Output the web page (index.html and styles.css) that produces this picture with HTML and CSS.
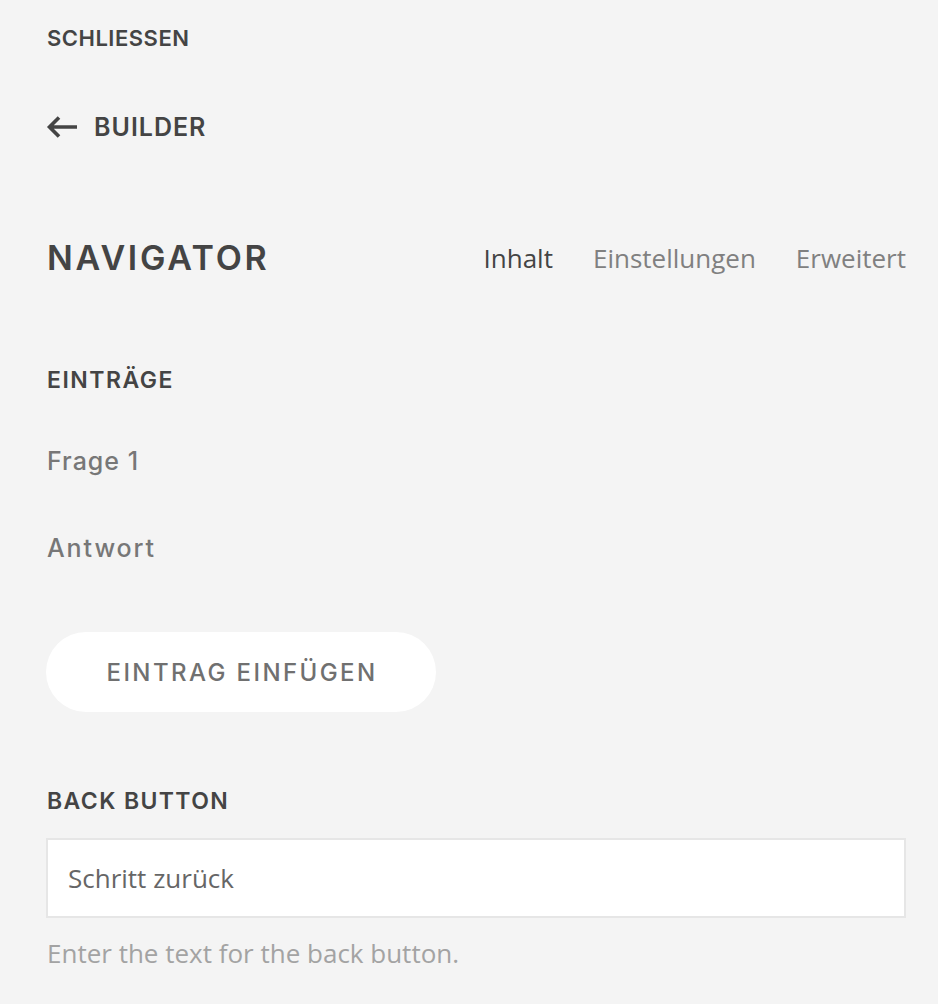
FILE: index.html
```html
<!DOCTYPE html>
<html lang="de">
<head>
<meta charset="utf-8">
<title>Navigator</title>
<link rel="stylesheet" href="styles.css">
</head>
<body>
<div class="panel">
  <div class="close">SCHLIESSEN</div>
  <div class="back-link">
    <svg class="arrow" width="32" height="24" viewBox="0 0 32 24"><path d="M31 12H3.5M13 2.5L3.5 12L13 21.5" fill="none" stroke="#444" stroke-width="3.6" stroke-linecap="butt" stroke-linejoin="miter"/></svg>
    <span>BUILDER</span>
  </div>
  <div class="header">
    <h1 class="title">NAVIGATOR</h1>
    <nav class="tabs">
      <span class="tab active">Inhalt</span>
      <span class="tab">Einstellungen</span>
      <span class="tab">Erweitert</span>
    </nav>
  </div>
  <div class="section-label entries-label">EINTRÄGE</div>
  <div class="entry entry-first">Frage 1</div>
  <div class="entry entry-second">Antwort</div>
  <button class="add-btn">EINTRAG EINFÜGEN</button>
  <div class="section-label back-label">BACK BUTTON</div>
  <div class="input">Schritt zurück</div>
  <div class="help">Enter the text for the back button.</div>
</div>
</body>
</html>
```
FILE: styles.css
```css
html, body {
  margin: 0;
  padding: 0;
  background: #f4f4f4;
}
body {
  width: 938px;
  height: 1004px;
  overflow: hidden;
}
.panel {
  padding: 0 32px 0 47px;
  font-family: Inter, "Liberation Sans", sans-serif;
  color: #444;
}
.close {
  padding-top: 23px;
  font-size: 22px;
  line-height: 30px;
  font-weight: 600;
  letter-spacing: 0.5px;
}
.back-link {
  margin-top: 56px;
  height: 36px;
  display: flex;
  align-items: center;
  gap: 16px;
  font-size: 25px;
  line-height: 36px;
  font-weight: 600;
  letter-spacing: 1px;
}
.arrow {
  display: block;
  margin-left: -1px;
}
.header {
  margin-top: 88px;
  height: 50px;
  display: flex;
  justify-content: space-between;
  align-items: center;
}
.title {
  margin: 0;
  font-size: 34px;
  line-height: 50px;
  font-weight: 600;
  letter-spacing: 2.7px;
}
.tabs {
  display: flex;
  gap: 40px;
  font-family: "Open Sans", sans-serif;
  font-size: 26px;
  line-height: 50px;
  color: #808080;
}
.tab.active {
  color: #444;
}
.section-label {
  font-size: 23px;
  line-height: 30px;
  font-weight: 600;
}
.entries-label {
  margin-top: 82px;
  letter-spacing: 1.5px;
}
.entry {
  font-size: 25px;
  line-height: 30px;
  font-weight: 500;
  color: #777;
}
.entry-first {
  margin-top: 51px;
  letter-spacing: 1px;
}
.entry-second {
  margin-top: 57px;
  letter-spacing: 1.9px;
}
.add-btn {
  display: block;
  margin: 69px 0 0 -1px;
  width: 390px;
  height: 80px;
  border: none;
  border-radius: 40px;
  background: #fff;
  font-family: Inter, "Liberation Sans", sans-serif;
  font-size: 24px;
  font-weight: 500;
  letter-spacing: 2.4px;
  color: #707070;
  padding: 0 0 0 2px;
}
.back-label {
  margin-top: 74px;
  letter-spacing: 1.4px;
}
.input {
  margin: 22px 0 0 -1px;
  height: 80px;
  box-sizing: border-box;
  border: 2px solid #e6e6e6;
  background: #fff;
  padding: 0 20px;
  font-family: "Open Sans", sans-serif;
  font-size: 26px;
  line-height: 76px;
  color: #666;
}
.help {
  margin-top: 17px;
  font-family: "Open Sans", sans-serif;
  font-size: 26px;
  line-height: 36px;
  color: #a3a3a3;
}
```
